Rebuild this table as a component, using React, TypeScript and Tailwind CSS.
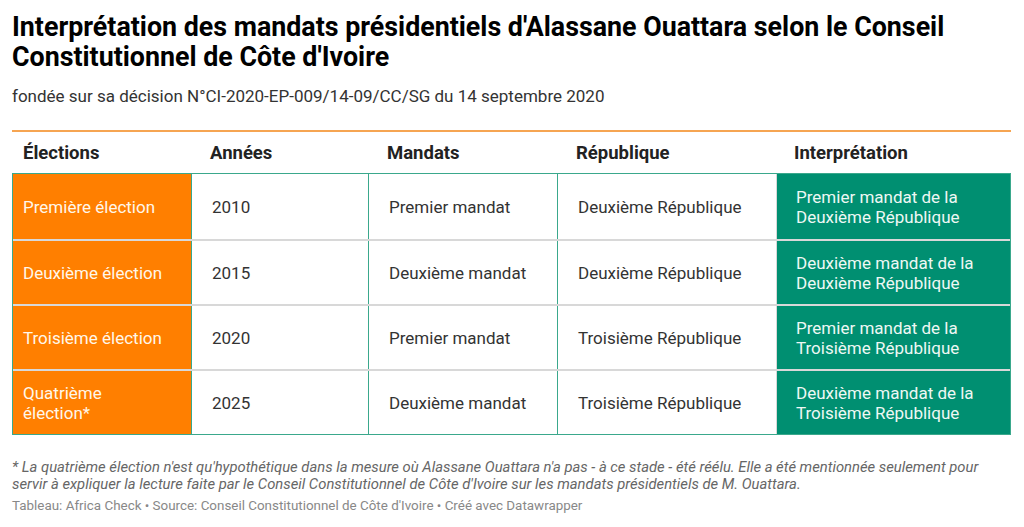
const rows = [
  ["Première élection", "2010", "Premier mandat", "Deuxième République", "Premier mandat de la Deuxième République"],
  ["Deuxième élection", "2015", "Deuxième mandat", "Deuxième République", "Deuxième mandat de la Deuxième République"],
  ["Troisième élection", "2020", "Premier mandat", "Troisième République", "Premier mandat de la Troisième République"],
  ["Quatrième élection*", "2025", "Deuxième mandat", "Troisième République", "Deuxième mandat de la Troisième République"],
];

const widths = ["w-[178px]", "w-[177px]", "w-[189px]", "w-[219px]", "w-[234px]"];

export default function App() {
  return (
    <div className="min-h-[527px] bg-white text-[#333] font-['Roboto',sans-serif]">
      <div className="px-3 pt-[12px]">
        <h1 className="text-[26.8px] leading-[30px] font-bold text-black w-[1000px]">
          Interprétation des mandats présidentiels d'Alassane Ouattara selon le Conseil Constitutionnel de Côte d'Ivoire
        </h1>
        <p className="mt-[14px] text-[17px] leading-[20px] text-[#333]">
          fondée sur sa décision N°CI-2020-EP-009/14-09/CC/SG du 14 septembre 2020
        </p>

        <div className="mt-[24px] w-[999px]">
          <div className="h-[2px] bg-[#f6a552]" />
          <div className="flex h-[41px] items-center pt-[2px] text-[18.5px] font-bold text-[#222]">
            <div className={`${widths[0]} pl-[11px]`}>Élections</div>
            <div className={`${widths[1]} pl-[20px]`}>Années</div>
            <div className={`${widths[2]} pl-[20px]`}>Mandats</div>
            <div className={`${widths[3]} pl-[20px]`}>République</div>
            <div className={`${widths[4]} pl-[19px]`}>Interprétation</div>
          </div>

          <div className="border border-[#3aa88c] text-[17px] leading-[20px]">
            {rows.map((r, i) => (
              <div key={i} className={`flex h-[65px] ${i > 0 ? "border-t-2 border-[#d8d8d8]" : ""}`}>
                <div className={`${widths[0]} flex items-center bg-[#ff7f00] pl-[10px] pr-[28px] text-[#fff7ea]`}>
                  {r[0]}
                </div>
                <div className={`${widths[1]} flex items-center border-l border-[#3aa88c] pl-[20px]`}>{r[1]}</div>
                <div className={`${widths[2]} flex items-center border-l border-[#3aa88c] pl-[20px]`}>{r[2]}</div>
                <div className={`${widths[3]} flex items-center border-l border-[#3aa88c] pl-[20px]`}>{r[3]}</div>
                <div className={`${widths[4]} flex items-center border-l border-[#d8d8d8] bg-[#008f71] pl-[19px] pr-6 text-[#eef8f4]`}>
                  {r[4]}
                </div>
              </div>
            ))}
          </div>
        </div>

        <p className="mt-[24px] w-[1000px] text-[14.8px] leading-[17px] italic text-[#666]">
          * La quatrième élection n'est qu'hypothétique dans la mesure où Alassane Ouattara n'a pas - à ce stade - été réélu. Elle a été mentionnée seulement pour servir à expliquer la lecture faite par le Conseil Constitutionnel de Côte d'Ivoire sur les mandats présidentiels de M. Ouattara.
        </p>
        <p className="mt-[5px] text-[13.4px] leading-[16px] text-[#888]">
          Tableau: Africa Check • Source: Conseil Constitutionnel de Côte d'Ivoire • Créé avec Datawrapper
        </p>
      </div>
    </div>
  );
}
